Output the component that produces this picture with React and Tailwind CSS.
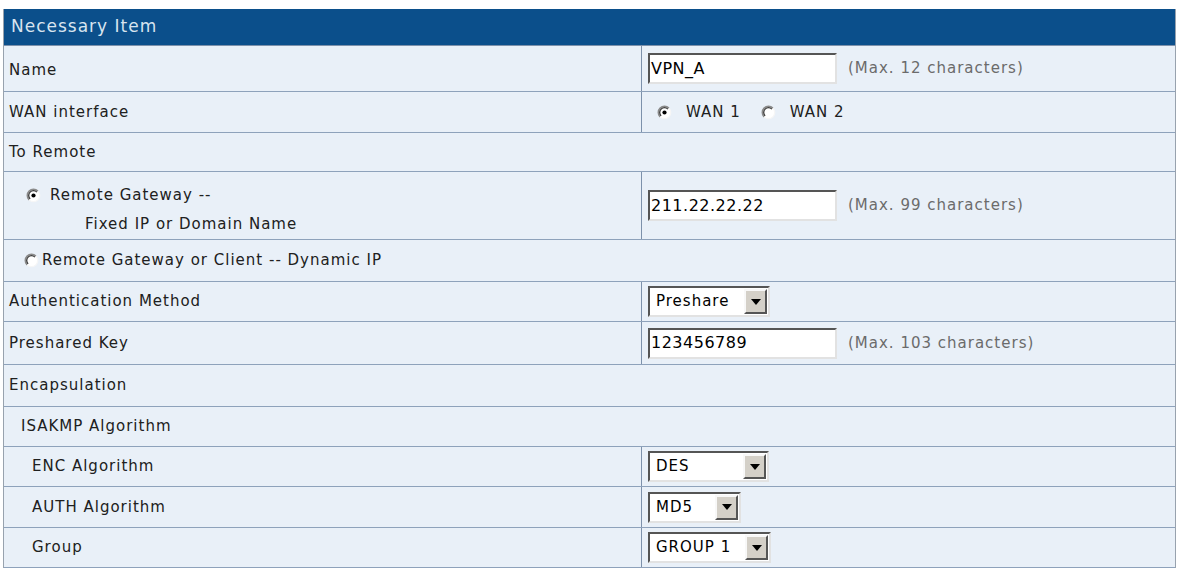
import React from "react";

const font = { fontFamily: '"DejaVu Sans", Verdana, sans-serif' };

function Radio({ checked }) {
  return (
    <svg width="15" height="15" viewBox="0 0 15 15" className="shrink-0">
      <circle cx="7.5" cy="7.5" r="6.2" fill="#ffffff" />
      <path d="M11.9 3.1 A6.2 6.2 0 0 0 3.1 11.9" fill="none" stroke="#8a8a8a" strokeWidth="1.5" />
      <path d="M10.9 4.1 A4.8 4.8 0 0 0 4.1 10.9" fill="none" stroke="#3a3a3a" strokeWidth="1.3" />
      <path d="M3.1 11.9 A6.2 6.2 0 0 0 11.9 3.1" fill="none" stroke="#f6f6f6" strokeWidth="1.3" />
      {checked && <circle cx="7.5" cy="7.5" r="2.1" fill="#000" />}
    </svg>
  );
}

function TextBox({ value }) {
  return (
    <div className="w-[189px] h-[31px] bg-white border-2 border-t-[#555] border-l-[#555] border-r-[#e2e2e2] border-b-[#e2e2e2] flex items-center pl-[1px] text-[16px] text-black leading-none tracking-[0.5px]">
      {value}
    </div>
  );
}

function Select({ value, w }) {
  return (
    <div className={`${w} h-[31px] bg-white border-2 border-t-[#555] border-l-[#555] border-r-[#e2e2e2] border-b-[#e2e2e2] flex items-center text-[15px] text-black leading-none`}>
      <span className="flex-1 pl-[6px]">{value}</span>
      <div className="w-[23px] h-[25px] mr-[1px] bg-[#d4d0c8] border-2 border-t-[#f8f8f8] border-l-[#f8f8f8] border-r-[#555] border-b-[#555] flex items-center justify-center">
        <svg width="10" height="6" viewBox="0 0 10 6">
          <path d="M0 0 H10 L5 6 Z" fill="#000" />
        </svg>
      </div>
    </div>
  );
}

function Row({ h, left, right, full }) {
  return (
    <div className={`flex border-b border-[#8ea2bb] ${h}`}>
      {full ? (
        <div className="flex-1 flex items-center">{left}</div>
      ) : (
        <>
          <div className="w-[638px] shrink-0 border-r border-[#7d91ab] flex items-center">{left}</div>
          <div className="flex-1 flex items-center pl-[6px]">{right}</div>
        </>
      )}
    </div>
  );
}

const Hint = ({ children }) => (
  <span className="ml-[11px] text-[#6b6b6b] text-[15px]">{children}</span>
);

export default function App() {
  return (
    <div className="w-[1184px] h-[573px] bg-white pt-[9px] pl-[3px]" style={font}>
      <div className="w-[1173px] border-l border-r border-[#98a2ae] text-[15px] text-[#202020] tracking-[1px] bg-[#e9f0f8]">
        <div className="h-[37px] bg-[#0b4f8b] flex items-center pl-[7px] text-[#d8e4ef] text-[17px] border-b border-[#7d91ab]">
          Necessary Item
        </div>
        <Row
          h="h-[46px]"
          left={<span className="pl-[5px] pt-[4px]">Name</span>}
          right={
            <>
              <TextBox value="VPN_A" />
              <Hint>(Max. 12 characters)</Hint>
            </>
          }
        />
        <Row
          h="h-[41px]"
          left={<span className="pl-[5px]">WAN interface</span>}
          right={
            <div className="flex items-center pl-[9px]">
              <Radio checked />
              <span className="ml-[14px]">WAN 1</span>
              <span className="ml-[20px] flex"><Radio /></span>
              <span className="ml-[14px]">WAN 2</span>
            </div>
          }
        />
        <Row full h="h-[39px]" left={<span className="pl-[5px]">To Remote</span>} />
        <Row
          h="h-[68px]"
          left={
            <div className="pl-[22px] pt-[8px] flex flex-col gap-[6px]">
              <div className="flex items-center">
                <Radio checked />
                <span className="ml-[9px]">Remote Gateway --</span>
              </div>
              <div className="pl-[59px]">Fixed IP or Domain Name</div>
            </div>
          }
          right={
            <>
              <TextBox value="211.22.22.22" />
              <Hint>(Max. 99 characters)</Hint>
            </>
          }
        />
        <Row
          full
          h="h-[42px]"
          left={
            <div className="pl-[20px] flex items-center">
              <Radio />
              <span className="ml-[3px]">Remote Gateway or Client -- Dynamic IP</span>
            </div>
          }
        />
        <Row
          h="h-[40px]"
          left={<span className="pl-[5px]">Authentication Method</span>}
          right={<Select value="Preshare" w="w-[122px]" />}
        />
        <Row
          h="h-[43px]"
          left={<span className="pl-[5px]">Preshared Key</span>}
          right={
            <>
              <TextBox value="123456789" />
              <Hint>(Max. 103 characters)</Hint>
            </>
          }
        />
        <Row full h="h-[42px]" left={<span className="pl-[5px]">Encapsulation</span>} />
        <Row full h="h-[40px]" left={<span className="pl-[17px]">ISAKMP Algorithm</span>} />
        <Row
          h="h-[40px]"
          left={<span className="pl-[28px]">ENC Algorithm</span>}
          right={<Select value="DES" w="w-[121px]" />}
        />
        <Row
          h="h-[41px]"
          left={<span className="pl-[28px]">AUTH Algorithm</span>}
          right={<Select value="MD5" w="w-[93px]" />}
        />
        <Row
          h="h-[40px]"
          left={<span className="pl-[28px]">Group</span>}
          right={<Select value="GROUP 1" w="w-[123px]" />}
        />
      </div>
    </div>
  );
}
